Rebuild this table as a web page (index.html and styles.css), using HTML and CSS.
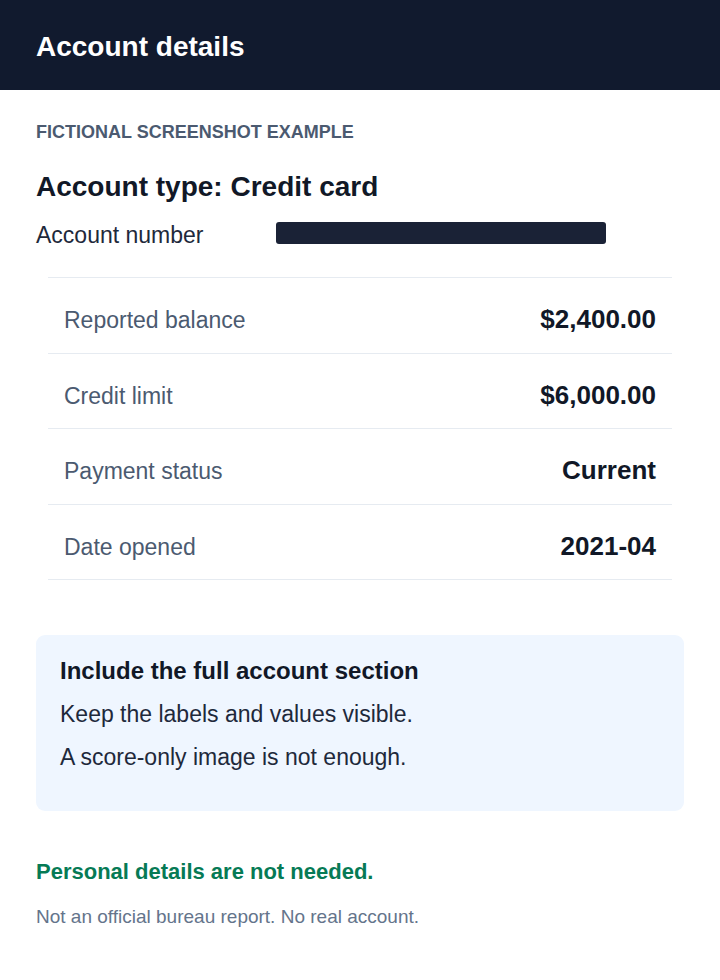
FILE: index.html
```html
<!DOCTYPE html>
<html lang="en">
<head>
  <meta charset="UTF-8" />
  <meta name="viewport" content="width=device-width,initial-scale=1.0" />
  <title>Account details</title>
  <link rel="stylesheet" href="styles.css">
</head>
<body>
  <header class="top-bar">
    <h1>Account details</h1>
  </header>

  <main class="content">
    <p class="eyebrow">Fictional screenshot example</p>
    <h2 class="account-type">Account type: Credit card</h2>
    <div class="account-number">
      <span class="account-number-label">Account number</span>
      <span class="redacted"></span>
    </div>

    <div class="details">
      <div class="detail-row">
        <span class="detail-label">Reported balance</span>
        <span class="detail-value">$2,400.00</span>
      </div>
      <div class="detail-row">
        <span class="detail-label">Credit limit</span>
        <span class="detail-value">$6,000.00</span>
      </div>
      <div class="detail-row">
        <span class="detail-label">Payment status</span>
        <span class="detail-value">Current</span>
      </div>
      <div class="detail-row">
        <span class="detail-label">Date opened</span>
        <span class="detail-value">2021-04</span>
      </div>
    </div>

    <div class="note">
      <h3>Include the full account section</h3>
      <p>Keep the labels and values visible.</p>
      <p>A score-only image is not enough.</p>
    </div>

    <p class="ok-text">Personal details are not needed.</p>
    <p class="disclaimer">Not an official bureau report. No real account.</p>
  </main>
</body>
</html>
```

FILE: styles.css
```css
* {
  box-sizing: border-box;
}

body {
  margin: 0;
  font-family: "Liberation Sans", Arial, sans-serif;
  background: #fff;
  color: #111827;
}

.top-bar {
  display: flex;
  align-items: center;
  height: 90px;
  padding: 3px 36px 0;
  background: #111a2e;
}

.top-bar h1 {
  margin: 0;
  font-size: 28px;
  line-height: 34px;
  font-weight: bold;
  color: #fff;
}

.content {
  padding: 30px 36px 0;
}

.eyebrow {
  margin: 0;
  font-size: 18px;
  line-height: 24px;
  font-weight: bold;
  text-transform: uppercase;
  color: #4b5a70;
}

.account-type {
  margin: 26px 0 0;
  font-size: 28px;
  line-height: 34px;
  font-weight: bold;
  color: #111827;
}

.account-number {
  display: flex;
  align-items: flex-start;
  margin-top: 16px;
  font-size: 23px;
  line-height: 30px;
  color: #1e293b;
}

.account-number-label {
  width: 240px;
}

.redacted {
  width: 330px;
  height: 22px;
  margin-top: 2px;
  border-radius: 3px;
  background: #1a2236;
}

.details {
  margin: 27px 12px 0;
  border-top: 1px solid #e6ebf1;
}

.detail-row {
  display: flex;
  justify-content: space-between;
  align-items: baseline;
  height: 75.5px;
  padding: 26px 16px 0;
  border-bottom: 1px solid #e6ebf1;
}

.detail-label {
  font-size: 23px;
  line-height: 30px;
  color: #4b5a70;
}

.detail-value {
  font-size: 26px;
  line-height: 30px;
  font-weight: bold;
  color: #111827;
}

.note {
  margin-top: 55px;
  padding: 20px 24px 39px;
  border-radius: 9px;
  background: #eff6ff;
}

.note h3 {
  margin: 0;
  font-size: 24px;
  line-height: 32px;
  font-weight: bold;
  color: #111827;
}

.note p {
  margin: 12px 0 0;
  font-size: 23px;
  line-height: 30px;
  color: #1e293b;
}

.note p + p {
  margin-top: 13px;
}

.ok-text {
  margin: 47px 0 0;
  font-size: 22px;
  line-height: 28px;
  font-weight: bold;
  color: #067a55;
}

.disclaimer {
  margin: 19px 0 0;
  font-size: 19px;
  line-height: 24px;
  color: #64748b;
}
```
